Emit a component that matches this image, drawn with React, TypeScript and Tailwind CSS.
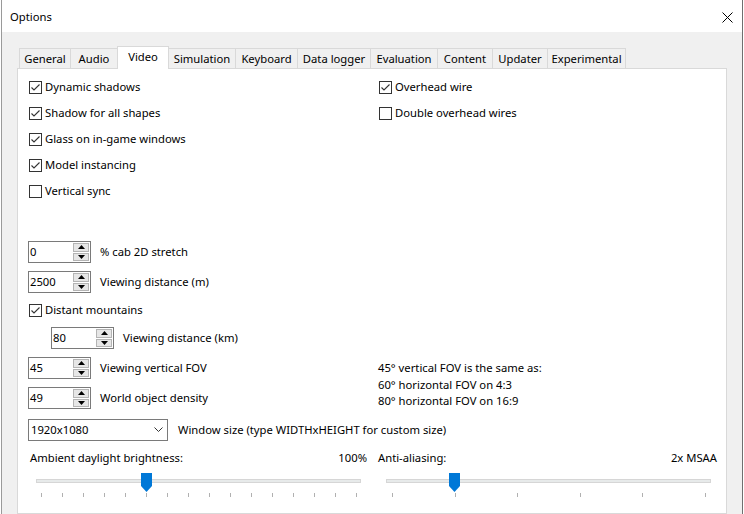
import React from 'react';

const tabs = [
  { label: 'General', w: 'w-[52px]' },
  { label: 'Audio', w: 'w-[48px]' },
  { label: 'Video', w: 'w-[52px]', active: true },
  { label: 'Simulation', w: 'w-[68px]' },
  { label: 'Keyboard', w: 'w-[63px]' },
  { label: 'Data logger', w: 'w-[74px]' },
  { label: 'Evaluation', w: 'w-[68px]' },
  { label: 'Content', w: 'w-[56px]' },
  { label: 'Updater', w: 'w-[56px]' },
  { label: 'Experimental', w: 'w-[79px]' },
];

function CheckRow({ label, checked }: { label: string; checked?: boolean }) {
  return (
    <div className="flex h-[26px] items-center pl-px">
      <div className="flex h-[13px] w-[13px] items-center justify-center border border-[#333333] bg-white">
        {checked && (
          <svg width="11" height="11" viewBox="0 0 11 11">
            <path d="M1.5 5.5 L4 8 L9.5 2.5" fill="none" stroke="#333333" strokeWidth="1.1" />
          </svg>
        )}
      </div>
      <span className="ml-[3px]">{label}</span>
    </div>
  );
}

function Arrow({ up }: { up?: boolean }) {
  return (
    <svg width="7" height="4" viewBox="0 0 7 4">
      <path d={up ? 'M0 4 L3.5 0 L7 4 Z' : 'M0 0 L3.5 4 L7 0 Z'} fill="#000" />
    </svg>
  );
}

function Spin({ value, label, indent }: { value: string; label: string; indent?: boolean }) {
  return (
    <div className={`flex h-[22px] items-center gap-[9px] ${indent ? 'ml-[23px]' : ''}`}>
      <div className="flex h-[22px] w-[63px] border border-[#7a7a7a] bg-white">
        <div className="flex-1 pl-px leading-[20px]">{value}</div>
        <div className="my-px mr-px flex w-[16px] flex-col gap-px">
          <div className="flex flex-1 items-center justify-center border border-[#b4b4b4] bg-[#e6e6e6]">
            <Arrow up />
          </div>
          <div className="flex flex-1 items-center justify-center border border-[#b4b4b4] bg-[#e6e6e6]">
            <Arrow />
          </div>
        </div>
      </div>
      <span>{label}</span>
    </div>
  );
}

function Slider({
  label,
  valueText,
  count,
  index,
  tickMl,
  tickMr,
  labelPl,
}: {
  label: string;
  valueText: string;
  count: number;
  index: number;
  tickMl: number;
  tickMr: number;
  labelPl: string;
}) {
  // track spans from 8px to (width - 7px) of the block
  const trackW = 340 - 8 - 7;
  const tickSpan = 340 - tickMl - tickMr - 1;
  const tickX = tickMl + (tickSpan * index) / (count - 1);
  const thumbLeft = Math.floor(tickX - 5 - 9);
  return (
    <div className="w-[340px]">
      <div className={`flex h-[16px] items-center justify-between pr-px leading-[16px] ${labelPl}`}>
        <span>{label}</span>
        <span>{valueText}</span>
      </div>
      <div className="relative ml-[8px] mr-[7px] mt-[13px] h-[4px] border border-[#d6d6d6] bg-[#e7eaea]" style={{ width: trackW }}>
        <svg
          className="absolute top-[-7px]"
          style={{ left: thumbLeft }}
          width="11"
          height="19"
          viewBox="0 0 11 19"
        >
          <path d="M0 0 H11 V13 L5.5 19 L0 13 Z" fill="#0078d7" />
        </svg>
      </div>
      <div
        className="mt-[10px] flex h-[4px] justify-between"
        style={{ marginLeft: tickMl, marginRight: tickMr }}
      >
        {Array.from({ length: count }).map((_, i) => (
          <div key={i} className="h-[4px] w-px bg-[#b0b0b0]" />
        ))}
      </div>
    </div>
  );
}

export default function App() {
  return (
    <div
      className="flex h-[514px] w-[744px] flex-col overflow-hidden bg-white text-[11.25px] leading-[16px] text-black"
      style={{ fontFamily: '"Segoe UI", "Noto Sans", sans-serif' }}
    >
      <div className="ml-px mr-px flex h-[514px] flex-col border-l border-r border-l-[#9a9a9a] border-r-[#6f6f6f] bg-[#f0f0f0]">
        {/* Title bar */}
        <div className="flex h-[32px] shrink-0 items-center justify-between bg-white pl-[8px] pr-[9px] pt-[2px]">
          <span>Options</span>
          <svg width="11" height="11" viewBox="0 0 11 11">
            <path d="M0.5 0.5 L10.5 10.5 M10.5 0.5 L0.5 10.5" stroke="#000" strokeWidth="1" />
          </svg>
        </div>

        <div className="flex flex-1 flex-col pl-[15px] pt-[14px]">
          {/* Tabs */}
          <div className="flex h-[22px] items-end pl-[2px]">
            {tabs.map((t, i) => (
              <div
                key={t.label}
                className={`flex items-center justify-center border border-b-0 border-[#d9d9d9] ${t.w} ${
                  i > 0 ? '-ml-px' : ''
                } ${t.active ? 'relative z-10 mb-[-1px] h-[23px] bg-white pb-[3px]' : 'h-[20px] bg-[#f0f0f0] pt-px'}`}
              >
                {t.label}
              </div>
            ))}
          </div>

          {/* Panel */}
          <div className="w-[710px] flex-1 border border-[#d9d9d9] bg-white pl-[10px] pt-[5px]">
            <div className="flex">
              <div className="w-[350px]">
                <CheckRow label="Dynamic shadows" checked />
                <CheckRow label="Shadow for all shapes" checked />
                <CheckRow label="Glass on in-game windows" checked />
                <CheckRow label="Model instancing" checked />
                <CheckRow label="Vertical sync" />
              </div>
              <div>
                <CheckRow label="Overhead wire" checked />
                <CheckRow label="Double overhead wires" />
              </div>
            </div>

            <div className="mt-[37px] flex flex-col gap-[8px]">
              <Spin value="0" label="% cab 2D stretch" />
              <Spin value="2500" label="Viewing distance (m)" />
            </div>
            <div className="mt-[6px] flex h-[22px] items-center">
              <div className="-my-[2px]">
                <CheckRow label="Distant mountains" checked />
              </div>
            </div>
            <div className="mt-[6px]">
              <Spin value="80" label="Viewing distance (km)" indent />
            </div>

            <div className="mt-[8px] flex">
              <div className="flex w-[350px] flex-col gap-[8px]">
                <Spin value="45" label="Viewing vertical FOV" />
                <Spin value="49" label="World object density" />
              </div>
              <div className="pt-[3px] leading-[16.5px]">
                <div>45° vertical FOV is the same as:</div>
                <div>60° horizontal FOV on 4:3</div>
                <div>80° horizontal FOV on 16:9</div>
              </div>
            </div>

            <div className="mt-[9px] flex items-center gap-[10px]">
              <div className="flex h-[22px] w-[140px] items-center justify-between border border-[#7a7a7a] bg-white pl-[2px] pr-[4px]">
                <span>1920x1080</span>
                <svg width="9" height="5" viewBox="0 0 9 5">
                  <path d="M0.5 0.5 L4.5 4.5 L8.5 0.5" fill="none" stroke="#333" strokeWidth="1" />
                </svg>
              </div>
              <span>Window size (type WIDTHxHEIGHT for custom size)</span>
            </div>

            <div className="mt-[9px] flex gap-[10px]">
              <Slider
                label="Ambient daylight brightness:"
                valueText="100%"
                count={16}
                index={5}
                tickMl={13}
                tickMr={11}
                labelPl="pl-[2px]"
              />
              <Slider
                label="Anti-aliasing:"
                valueText="2x MSAA"
                count={6}
                index={1}
                tickMl={14}
                tickMr={12}
                labelPl="pl-0"
              />
            </div>
          </div>
        </div>
      </div>
    </div>
  );
}
